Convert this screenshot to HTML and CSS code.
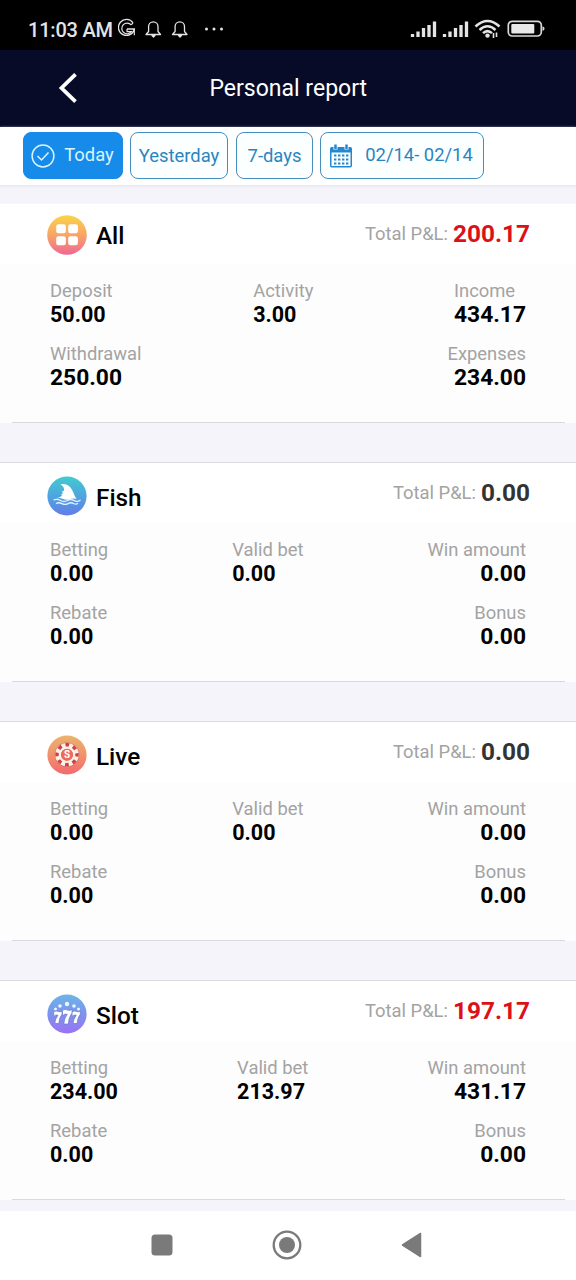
FILE: index.html
```html
<!DOCTYPE html>
<html lang="en">
<head>
<meta charset="utf-8">
<title>Personal report</title>
<link rel="stylesheet" href="styles.css">
</head>
<body>
<div class="status">
  <span class="clock">11:03 AM</span>
  <svg class="status-left" width="110" height="24" viewBox="0 0 110 24" fill="none" stroke="#e4e4e4">
    <path d="M15 5.800A8 8 0 1 0 16.300 12H9" stroke-width="1.300"/>
    <path d="M13.200 7.800A5.400 5.400 0 1 0 13.500 14.700H9V12" stroke-width="1.200"/>
    <path d="M16.300 12V18.300M15 5.800L13.200 7.800" stroke-width="1.200"/>
    <g id="bell" stroke-width="1.300" stroke-linejoin="round"><path d="M28 17.500H42.500L40 14.500V9.500A4.700 4.700 0 0 0 30.600 9.500V14.500Z"/><path d="M34 18.500H37L35.500 20Z" fill="#e4e4e4"/></g>
    <use href="#bell" x="26.500"/>
    <g fill="#e4e4e4" stroke="none"><circle cx="88.500" cy="12" r="1.500"/><circle cx="96" cy="12" r="1.500"/><circle cx="103.500" cy="12" r="1.500"/></g>
  </svg>
  <svg class="status-right" width="136" height="24" viewBox="0 0 136 24" fill="none">
    <g id="bars" stroke="#e4e4e4" stroke-width="3.300"><path d="M3.500 20V17M9 20V14.500M14.500 20V11M20 20V8M25.500 20V4.500"/></g>
    <use href="#bars" x="32"/>
    <g stroke="#e4e4e4" stroke-width="2.500"><path d="M66.500 9.500Q78.500 -1.500 90.500 9.500M70.500 13Q78.500 5.500 86.500 13M74 16.200Q78.500 12 83 16.200"/></g>
    <circle cx="78.500" cy="18.600" r="2.200" fill="#e4e4e4"/>
    <path d="M84.500 21V16M87.500 15.500V20" stroke="#e4e4e4" stroke-width="1.600"/>
    <rect x="99.300" y="4.300" width="33" height="14.700" rx="4" stroke="#d8d8d8" stroke-width="1.700"/>
    <rect x="102.300" y="7" width="23" height="9.500" rx="1" fill="#e8e8e8"/>
    <path d="M133.500 9.500Q135.500 9.500 135.500 11.600Q135.500 13.800 133.500 13.800Z" fill="#d8d8d8"/>
  </svg>
</div>
<header class="navbar">
  <svg class="back" width="20" height="32" viewBox="0 0 20 32" fill="none" stroke="#fff" stroke-width="3.800"><path d="M18.500 1.300L4.500 15L18.500 28.700"/></svg>
  <h1 class="nav-title">Personal report</h1>
</header>
<nav class="filters">
  <div class="chip chip-today">
    <svg width="24" height="24" viewBox="0 0 24 24" fill="none" stroke="#d8f4ff" stroke-width="1.500"><circle cx="12" cy="12" r="10.900"/><path d="M6.500 12L10.500 16L17.500 8.500"/></svg>
    <span>Today</span>
  </div>
  <div class="chip chip-yesterday">Yesterday</div>
  <div class="chip chip-week">7-days</div>
  <div class="chip chip-date">
    <svg width="22" height="24" viewBox="0 0 22 24"><rect x=".75" y="3.750" width="20.500" height="19" rx="1" fill="#fff" stroke="#2488ce" stroke-width="1.500"/><path d="M1 3H21V8.500H1Z" fill="#2488ce"/><path d="M5.500 0V5.500M16.500 0V5.500" stroke="#fff" stroke-width="4"/><path d="M5.500 .5V5M16.500 .5V5" stroke="#2488ce" stroke-width="2.500"/><path d="M4 11.500H19M4 15.500H19M4 19.500H19" stroke="#2488ce" stroke-width="2.200" stroke-dasharray="2.400 1.600"/></svg>
    <span>02/14- 02/14</span>
  </div>
</nav>
<main class="report">
  <section class="card card-all">
    <div class="card-head">
      <svg class="icon" width="40" height="40" viewBox="0 0 40 40"><defs><linearGradient id="ga" x2="0" y2="1"><stop stop-color="#fbd44a"/><stop offset=".5" stop-color="#f8a566"/><stop offset="1" stop-color="#ee6793"/></linearGradient></defs><circle cx="20" cy="20" r="19.800" fill="url(#ga)"/><g fill="#fff"><rect x="9.200" y="9.300" width="9.700" height="9" rx="2.300"/><rect x="21.200" y="9.300" width="9.700" height="9" rx="2.300"/><rect x="9.200" y="21.200" width="9.700" height="9" rx="2.300"/><rect x="21.200" y="21.200" width="9.700" height="9" rx="2.300"/></g></svg>
      <h2 class="name">All</h2>
      <p class="total"><span>Total P&amp;L:</span><b class="loss">200.17</b></p>
    </div>
    <div class="card-body">
      <div class="row">
        <div class="stat"><span>Deposit</span><b>50.00</b></div>
        <div class="stat"><span>Activity</span><b>3.00</b></div>
        <div class="stat large"><span>Income</span><b>434.17</b></div>
      </div>
      <div class="row">
        <div class="stat large"><span>Withdrawal</span><b>250.00</b></div>
        <div class="stat large end"><span>Expenses</span><b>234.00</b></div>
      </div>
    </div>
  </section>
  <section class="card">
    <div class="card-head">
      <svg class="icon" width="40" height="40" viewBox="0 0 40 40"><defs><linearGradient id="gf" x2="0" y2="1"><stop stop-color="#40cdd0"/><stop offset=".5" stop-color="#50a4df"/><stop offset="1" stop-color="#637ce9"/></linearGradient></defs><circle cx="20" cy="20" r="19.600" fill="url(#gf)"/><path d="M9.500 22.500Q13.500 21.500 15.500 19L13.800 18.200L16.200 17.200L14.800 15.600L17 14.800C17.300 12 16.500 10 13.500 8.500C17 7.300 21 8.500 23.500 11.500C26.300 15 26.800 19 29.500 23Q26 21.800 23 23.200Q19 24.700 15.500 22.700Q12.500 21.500 9.500 22.500Z" fill="#fff"/><path d="M6.500 24Q10 22.500 13.500 24.500T20.500 24.500T27 24.500T33.500 24M9 27.500Q12 26 15 27.600T21 27.600T26.500 27.500T31 27.200" fill="none" stroke="#dff4ff" stroke-width="1.300"/></svg>
      <h2 class="name">Fish</h2>
      <p class="total"><span>Total P&amp;L:</span><b>0.00</b></p>
    </div>
    <div class="card-body">
      <div class="row">
        <div class="stat"><span>Betting</span><b>0.00</b></div>
        <div class="stat"><span>Valid bet</span><b>0.00</b></div>
        <div class="stat large end"><span>Win amount</span><b>0.00</b></div>
      </div>
      <div class="row">
        <div class="stat"><span>Rebate</span><b>0.00</b></div>
        <div class="stat large end"><span>Bonus</span><b>0.00</b></div>
      </div>
    </div>
  </section>
  <section class="card">
    <div class="card-head">
      <svg class="icon" width="40" height="40" viewBox="0 0 40 40"><defs><linearGradient id="gl" x2="0" y2="1"><stop stop-color="#eab46c"/><stop offset=".5" stop-color="#f2916c"/><stop offset="1" stop-color="#f3686f"/></linearGradient></defs><circle cx="20" cy="20" r="19.600" fill="url(#gl)"/><circle cx="20" cy="19.700" r="12.300" fill="#d5605c"/><circle cx="20" cy="19.700" r="8.900" fill="none" stroke="#fff0e4" stroke-width="5.800"/><circle cx="20" cy="19.700" r="10" fill="none" stroke="#cb4149" stroke-width="3.400" stroke-dasharray="3.800 4.054" stroke-dashoffset="1.900"/><circle cx="20" cy="19.700" r="5.800" fill="#ef6a57"/><text class="chip-mark" x="20" y="23.300" text-anchor="middle">S</text></svg>
      <h2 class="name">Live</h2>
      <p class="total"><span>Total P&amp;L:</span><b>0.00</b></p>
    </div>
    <div class="card-body">
      <div class="row">
        <div class="stat"><span>Betting</span><b>0.00</b></div>
        <div class="stat"><span>Valid bet</span><b>0.00</b></div>
        <div class="stat large end"><span>Win amount</span><b>0.00</b></div>
      </div>
      <div class="row">
        <div class="stat"><span>Rebate</span><b>0.00</b></div>
        <div class="stat large end"><span>Bonus</span><b>0.00</b></div>
      </div>
    </div>
  </section>
  <section class="card">
    <div class="card-head">
      <svg class="icon" width="40" height="40" viewBox="0 0 40 40"><defs><linearGradient id="gs" x2="0" y2="1"><stop stop-color="#6cb5e6"/><stop offset=".5" stop-color="#7d93ed"/><stop offset="1" stop-color="#9b72f5"/></linearGradient></defs><circle cx="20" cy="20" r="19.600" fill="url(#gs)"/><g fill="#eaf5ff"><circle cx="8.500" cy="15" r="1.500"/><circle cx="13" cy="12" r="1.800"/><circle cx="20" cy="10" r="2.200"/><circle cx="27" cy="12" r="1.800"/><circle cx="31.500" cy="15" r="1.500"/></g><g stroke-linejoin="round" fill="#fff" stroke="#6875c9" stroke-width=".7"><path id="seven" d="M6.500 18Q9 16.200 11.500 17.500Q13 18.200 15 17.200V20.300Q12 24 11.800 29.500H7.800Q8 25 11 21.200Q8.500 20.200 7 22.500Z"/><use href="#seven" x="18.300"/><path d="M15.300 16.500Q18 14.500 20.500 16Q22.500 17 25 15.500V19Q21.600 23.500 21.300 30H16.800Q17 24.500 20.300 20.300Q17.500 19.200 15.800 21.800Z"/></g></svg>
      <h2 class="name">Slot</h2>
      <p class="total"><span>Total P&amp;L:</span><b class="loss">197.17</b></p>
    </div>
    <div class="card-body">
      <div class="row">
        <div class="stat"><span>Betting</span><b>234.00</b></div>
        <div class="stat"><span>Valid bet</span><b>213.97</b></div>
        <div class="stat large end"><span>Win amount</span><b>431.17</b></div>
      </div>
      <div class="row">
        <div class="stat"><span>Rebate</span><b>0.00</b></div>
        <div class="stat large end"><span>Bonus</span><b>0.00</b></div>
      </div>
    </div>
  </section>
</main>
<footer class="sysnav">
  <svg width="22" height="22" viewBox="0 0 22 22"><rect x=".5" y=".5" width="21" height="21" rx="3.500" fill="#7a7a7a"/></svg>
  <svg width="30" height="30" viewBox="0 0 30 30"><circle cx="15" cy="15" r="13.300" fill="none" stroke="#7a7a7a" stroke-width="2.300"/><circle cx="15" cy="15" r="8" fill="#7a7a7a"/></svg>
  <svg width="22" height="26" viewBox="0 0 22 26"><path d="M1.500 13L19.500 1.500V24.500Z" fill="#7a7a7a" stroke="#7a7a7a" stroke-width="1.500" stroke-linejoin="round"/></svg>
</footer>
</body>
</html>
```
FILE: styles.css
```css
* { box-sizing: border-box; margin: 0; padding: 0; }
body { width: 576px; height: 1280px; overflow: hidden; display: flex; flex-direction: column; background: #f4f4fa; font-family: Roboto, sans-serif; color: #000; }
svg { display: block; flex: none; }

.status { height: 50px; flex: none; display: flex; align-items: flex-start; padding: 17px 31px 0 28px; background: #000; }
.clock { width: 90px; font-size: 20px; line-height: 26px; font-weight: 500; letter-spacing: -.2px; color: #e4e4e4; white-space: nowrap; }
.status-right { margin-left: auto; }

.navbar { height: 77px; flex: none; display: flex; align-items: center; padding-left: 57px; background: #080b27; }
.nav-title { margin-left: 132.500px; font-size: 23px; line-height: 28px; font-weight: 400; color: #fff; }

.filters { height: 58px; flex: none; display: flex; padding: 5px 23px; background: #fff; box-shadow: 0 1px 3px #e2e2e8; position: relative; }
.chip { height: 47px; display: flex; align-items: center; justify-content: center; border: 1.500px solid #438fc0; border-radius: 8px; font-size: 18.400px; color: #2a85bf; background: #fcffff; white-space: nowrap; }
.chip-today { width: 100px; margin-right: 7px; gap: 9px; padding-right: 1px; border-color: #168bea; background: #168bea; color: #d8f4ff; }
.chip-yesterday { width: 98px; margin-right: 8px; }
.chip-week { width: 77px; margin-right: 7px; }
.chip-date { width: 164px; gap: 13px; padding-right: 1px; }
.chip-today span, .chip-date span { padding-bottom: 2px; }

.report { flex: 1; min-height: 0; overflow: hidden; padding-top: 18px; display: flex; flex-direction: column; gap: 39px; }
.card { height: 220px; flex: none; display: flex; flex-direction: column; border-top: 1px solid #dcdce0; background: #fdfdfd; }
.card-all { border-top-color: #f8f8fb; }
.card-head { height: 60px; display: flex; align-items: flex-start; padding: 13px 46px 0 47px; background: #fff; }
.card-all .card-head { padding-top: 11px; }
.name { margin: 7px 0 0 9px; font-size: 24.300px; line-height: 30px; font-weight: 500; }
.card-all .name { margin-top: 6px; }
.total { display: flex; align-items: center; gap: 5px; margin: 2px 0 0 auto; font-size: 18.400px; line-height: 30px; color: #a3a3a3; white-space: nowrap; }
.card-all .total { margin-top: 4px; }
.total b { font-size: 24.400px; font-weight: 700; color: #333; }
.total .loss { color: #dc1118; }
.card-body { flex: 1; margin: 0 11px 0 12px; padding: 15px 39px 0 38px; border-bottom: 1px solid #d9d9dd; }
.row { height: 63px; display: flex; justify-content: space-between; }
.stat { display: flex; flex-direction: column; font-size: 18.400px; line-height: 24px; color: #a3a3a3; }
.stat b { font-size: 21.500px; font-weight: 700; line-height: 24px; color: #000; }
.large b { font-size: 22.800px; }
.end { align-items: flex-end; }
.chip-mark { font: 700 10px Roboto, sans-serif; fill: #fff; }

.sysnav { height: 69px; flex: none; display: grid; grid-template-columns: 22px 30px 22px; column-gap: 99px; justify-content: center; align-items: center; padding: 0 2px 1px 0; background: #fff; }
```
